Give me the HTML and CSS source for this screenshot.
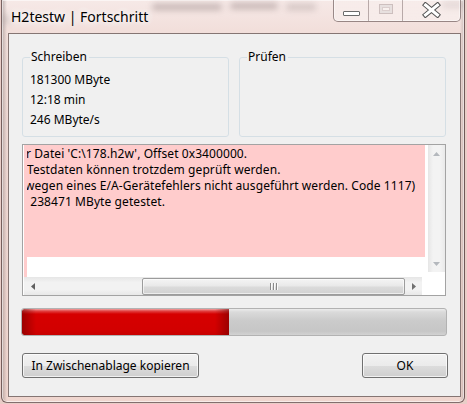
FILE: index.html
```html
<!DOCTYPE html>
<html lang="de">
<head>
<meta charset="utf-8">
<title>H2testw | Fortschritt</title>
<link rel="stylesheet" href="styles.css">
</head>
<body>
<div class="window">
  <div class="glass-blur" aria-hidden="true">
    <span class="blob b1"></span><span class="blob b2"></span><span class="blob b3"></span><span class="blob b4"></span><span class="blob b5"></span>
  </div>
  <div class="titlebar">
    <div class="title">H2testw | Fortschritt</div>
    <div class="caption-buttons">
      <div class="cb cb-min"><span class="min-glyph"></span></div>
      <div class="cb cb-max"><span class="max-glyph"></span></div>
      <div class="cb cb-close">
        <svg width="19" height="16" viewBox="0 0 19 16">
          <path d="M3.5 3 L15.5 13 M15.5 3 L3.5 13" stroke="#555555" stroke-width="5" stroke-linecap="square" fill="none"/>
          <path d="M3.5 3 L15.5 13 M15.5 3 L3.5 13" stroke="#ffffff" stroke-width="3" stroke-linecap="square" fill="none"/>
        </svg>
      </div>
    </div>
  </div>
  <div class="client">
    <div class="groups">
      <fieldset class="group">
        <legend>Schreiben</legend>
        <div class="vals">
          <div>181300 MByte</div>
          <div>12:18 min</div>
          <div>246 MByte/s</div>
        </div>
      </fieldset>
      <fieldset class="group">
        <legend>Prüfen</legend>
      </fieldset>
    </div>
    <div class="log">
      <div class="log-view">
        <div class="log-text">
          <div class="log-clip">
            <div class="line cut1">r Datei 'C:\178.h2w', Offset 0x3400000.</div>
            <div class="line">Testdaten können trotzdem geprüft werden.</div>
            <div class="line cut3">wegen eines E/A-Gerätefehlers nicht ausgeführt werden. Code 1117)</div>
            <div class="line"> 238471 MByte getestet.</div>
          </div>
        </div>
        <div class="log-rest"></div>
        <div class="hscroll">
          <div class="sb-btn"><svg width="4" height="7" viewBox="0 0 4 7"><polygon points="4,0 0,3.5 4,7" fill="#606060"/></svg></div>
          <div class="h-track">
            <div class="h-thumb"><span class="grip"></span><span class="grip"></span><span class="grip"></span></div>
          </div>
          <div class="sb-btn"><svg width="4" height="7" viewBox="0 0 4 7"><polygon points="0,0 4,3.5 0,7" fill="#707070"/></svg></div>
        </div>
      </div>
      <div class="vscroll">
        <div class="sb-btn"><svg width="7" height="4" viewBox="0 0 7 4"><polygon points="0,4 3.5,0 7,4" fill="#b4b8bd"/></svg></div>
        <div class="v-track"></div>
        <div class="sb-btn"><svg width="7" height="4" viewBox="0 0 7 4"><polygon points="0,0 3.5,4 7,0" fill="#b4b8bd"/></svg></div>
      </div>
    </div>
    <div class="progress"><div class="progress-fill" style="width:48.8%"></div></div>
    <div class="buttons">
      <button class="btn btn-copy">In Zwischenablage kopieren</button>
      <button class="btn btn-ok">OK</button>
    </div>
  </div>
</div>
</body>
</html>
```

FILE: styles.css
```css
* { box-sizing: border-box; }

html, body {
  margin: 0;
  padding: 0;
}

body {
  width: 467px;
  height: 404px;
  overflow: hidden;
  background: #e9cdc7;
  font-family: "Noto Sans", "Open Sans", sans-serif;
  font-size: 12px;
  color: #000;
}

.window {
  position: relative;
  height: 403px;
  margin: 0 2px 1px 1px;
  border: 1px solid rgba(70, 45, 45, 0.65);
  border-top: none;
  border-radius: 0 0 6px 6px;
  padding: 0 3px 5px 6px;
  display: flex;
  flex-direction: column;
  background:
    linear-gradient(to right, rgba(90,80,80,0.35) 0, rgba(90,80,80,0) 5px),
    linear-gradient(to left, rgba(90,80,80,0.25) 0, rgba(90,80,80,0) 4px),
    linear-gradient(#f6e9e7 0, #f2dfdb 30px, #efd9d4 120px, #f0d6cf 100%);
  box-shadow: inset 0 0 0 1px rgba(255, 255, 255, 0.55);
  overflow: hidden;
}

.glass-blur {
  position: absolute;
  left: 0;
  top: 0;
  width: 100%;
  height: 30px;
  filter: blur(3px);
  pointer-events: none;
}

.blob {
  position: absolute;
  height: 6px;
  border-radius: 3px;
  background: rgba(120, 100, 100, 0.4);
  top: 4px;
}
.b1 { left: 150px; width: 70px; }
.b2 { left: 228px; width: 48px; top: 3px; }
.b3 { left: 284px; width: 30px; background: rgba(120,100,100,0.28); }
.b4 { left: 440px; width: 24px; top: 2px; background: rgba(120,100,100,0.2); }
.b5 { left: 0; width: 8px; top: 14px; height: 10px; background: rgba(160,150,150,0.4); }

.titlebar {
  position: relative;
  height: 33px;
  flex: none;
  display: flex;
  justify-content: space-between;
  align-items: flex-start;
}

.title {
  padding: 7px 0 0 3px;
  font-size: 14px;
  line-height: 20px;
  color: #000;
  text-shadow: 0 0 6px #fff, 0 0 10px #fff, 0 0 14px #fff;
}

.caption-buttons {
  display: flex;
  height: 23px;
  margin-top: -1px;
  border: 1px solid rgba(90, 70, 70, 0.6);
  border-top: none;
  border-radius: 0 0 5px 5px;
  background: linear-gradient(rgba(255,255,255,0.15), rgba(255,255,255,0.35));
  box-shadow: inset 0 0 0 1px rgba(255,255,255,0.45);
  overflow: hidden;
}

.cb {
  display: flex;
  align-items: center;
  justify-content: center;
  height: 100%;
}

.cb-min { width: 35px; border-right: 1px solid rgba(90, 70, 70, 0.4); padding-top: 6px; }
.cb-max { width: 34px; border-right: 1px solid rgba(90, 70, 70, 0.4); padding-bottom: 3px; }
.cb-close { width: 57px; padding-bottom: 1px; }

.min-glyph {
  width: 17px;
  height: 5px;
  border: 1px solid #6a6a6a;
  border-radius: 1px;
  background: #fff;
}

.max-glyph {
  width: 14px;
  height: 10px;
  border: 1px solid rgba(150, 130, 130, 0.45);
  background: rgba(255,255,255,0.25);
  box-shadow: inset 0 0 0 2px rgba(255,255,255,0.35), inset 0 0 0 3px rgba(150,130,130,0.3);
}

.client {
  flex: 1;
  border: 1px solid #857573;
  background: #f0f0f0;
  padding: 15px 14px 0 13px;
  display: flex;
  flex-direction: column;
}

.groups {
  display: flex;
  gap: 10px;
}

.group {
  width: 207px;
  height: 88px;
  margin: 0;
  padding: 0 0 0 7px;
  border: 1px solid #d5dfe5;
  border-radius: 3px;
  min-width: 0;
}

.group legend {
  margin-left: 0;
  padding: 0 2px 0 1px;
  line-height: 16px;
  font-size: 12px;
}

.vals {
  padding-top: 5px;
  line-height: 20px;
}

.log {
  margin-top: 7px;
  height: 152px;
  border: 1px solid #a3a3a3;
  background: #fff;
  display: grid;
  grid-template-columns: 405px 17px;
}

.log-view {
  display: flex;
  flex-direction: column;
  padding-left: 1px;
}

.log-text {
  width: 401px;
  height: 112px;
  background: #ffcccc;
  padding: 1px 0 0 3px;
  line-height: 16px;
}

.log-clip {
  overflow: hidden;
  height: 100%;
}

.line {
  white-space: pre;
  letter-spacing: 0.08px;
}

.cut1 { margin-left: -1px; }
.cut3 { margin-left: -2px; }

.log-rest {
  height: 20px;
  border-left: 3px solid #ffcccc;
  margin-bottom: 0;
}

.hscroll {
  width: 398px;
  height: 18px;
  display: flex;
  padding-top: 1px;
  background: linear-gradient(#e6e6e6, #f2f2f2 30%, #f2f2f2 70%, #e8e8e8);
}

.sb-btn {
  width: 17px;
  flex: none;
  display: flex;
  align-items: center;
  justify-content: center;
}

.sb-btn svg { display: block; }

.h-track {
  flex: 1;
  display: flex;
  justify-content: flex-end;
}

.h-thumb {
  width: 263px;
  height: 17px;
  border: 1px solid #9c9c9c;
  border-radius: 2px;
  background: linear-gradient(#f4f4f4, #e9e9e9 45%, #dadada 55%, #d2d2d2);
  box-shadow: inset 0 0 0 1px rgba(255,255,255,0.6);
  display: flex;
  align-items: center;
  justify-content: center;
  gap: 2px;
}

.grip {
  width: 1px;
  height: 7px;
  background: #8a8a8a;
  box-shadow: 1px 0 0 #fafafa;
}

.vscroll {
  height: 127px;
  display: flex;
  flex-direction: column;
  background: linear-gradient(to right, #e6e6e6, #f3f3f3 30%, #f3f3f3 70%, #e9e9e9);
}

.vscroll .sb-btn {
  width: 17px;
  height: 17px;
}

.v-track { flex: 1; }

.progress {
  margin: 12px -1px 0;
  height: 28px;
  border: 1px solid #b2b2b2;
  border-radius: 3px;
  overflow: hidden;
  background: linear-gradient(#ececec 0, #dadada 3px, #cbcbcb 45%, #c6c6c6 85%, #d2d2d2 100%);
}

.progress-fill {
  height: 100%;
  border-radius: 2px 0 0 2px;
  background:
    linear-gradient(to right, rgba(110,0,0,0.55) 0, rgba(110,0,0,0) 14px, rgba(110,0,0,0) calc(100% - 14px), rgba(110,0,0,0.55) 100%),
    linear-gradient(#f3a3a3 0, #e24444 2px, #d60000 5px, #d20000 80%, #c80000 100%);
}

.buttons {
  margin-top: 17px;
  margin-right: -2px;
  display: flex;
  justify-content: space-between;
}

.btn {
  height: 25px;
  border: 1px solid #707070;
  border-radius: 3px;
  background: linear-gradient(#f2f2f2 0, #ebebeb 50%, #dddddd 50%, #cfcfcf 100%);
  box-shadow: inset 0 0 0 1px rgba(255,255,255,0.7);
  font-family: "Noto Sans", "Open Sans", sans-serif;
  font-size: 12px;
  color: #000;
  padding: 0;
  line-height: 20px;
}

.btn-copy { width: 177px; }
.btn-ok { width: 86px; }
```
